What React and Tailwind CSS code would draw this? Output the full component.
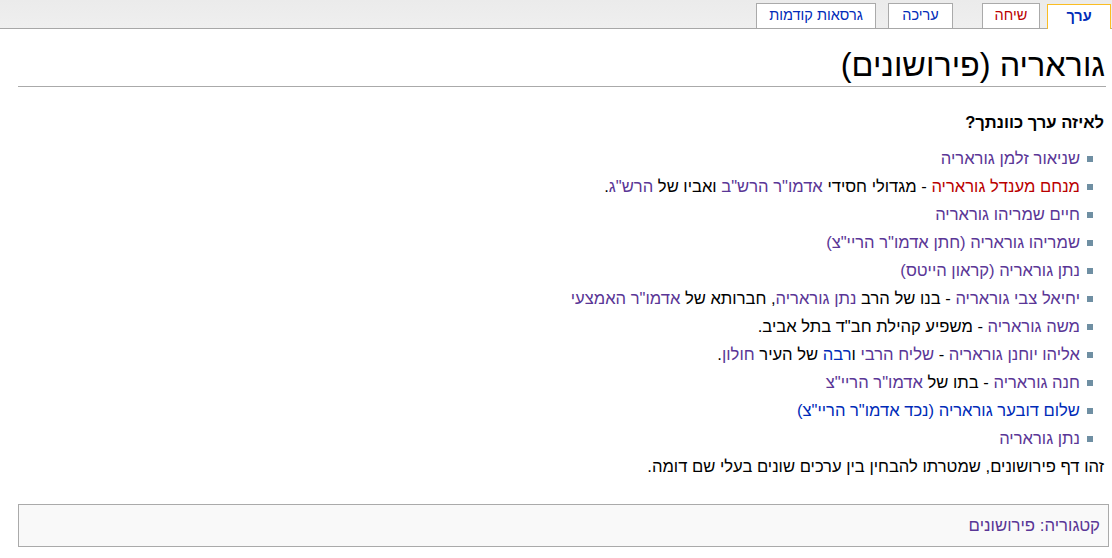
import React from "react";

const V = "text-[#5a3696]";
const B = "text-[#002bb8]";
const R = "text-[#ba0000]";

function Item({ children }) {
  return (
    <li className="flex items-center h-[28px]">
      <span className="w-[6px] h-[6px] bg-[#6f8fa3] ml-[7px] shrink-0" />
      <span>{children}</span>
    </li>
  );
}

export default function App() {
  return (
    <div
      dir="rtl"
      className="w-[1112px] h-[558px] bg-white overflow-hidden text-black"
      style={{ fontFamily: '"Liberation Sans", Arial, sans-serif' }}
    >
      {/* top tab bar */}
      <div className="h-[29px] border-b border-[#a7a7a7] bg-gradient-to-b from-[#ebebeb] to-[#efefef] flex items-end pr-[1px]">
        <div className="w-[64px] h-[25px] -mb-px bg-white border border-b-0 border-[#fabd23] flex items-center justify-center text-[14.5px] font-bold text-[#002bb8]">
          ערך
        </div>
        <div className="w-[58px] h-[25px] mr-[7px] bg-white border border-b-0 border-[#aaaaaa] flex items-center justify-center text-[14.5px] text-[#ba0000]">
          שיחה
        </div>
        <div className="w-[65px] h-[25px] mr-[29px] bg-white border border-b-0 border-[#aaaaaa] flex items-center justify-center text-[14.5px] text-[#002bb8]">
          עריכה
        </div>
        <div className="w-[120px] h-[25px] mr-[12px] bg-white border border-b-0 border-[#aaaaaa] flex items-center justify-center text-[14.5px] text-[#002bb8]">
          גרסאות קודמות
        </div>
      </div>

      {/* content */}
      <div className="pr-[6px] pl-[18px]">
        <h1 className="text-[32.4px] leading-[40px] pt-[16px] pb-[1px] border-b border-[#aaaaaa] pr-[1px]">
          גוראריה (פירושונים)
        </h1>

        <div className="text-[16.6px] pr-[2px]">
          <p className="font-bold mt-[26px] leading-[20px]">לאיזה ערך כוונתך?</p>

          <ul className="mt-[12px] pr-[11px]">
            <Item>
              <span className={V}>שניאור זלמן גוראריה</span>
            </Item>
            <Item>
              <span className={R}>מנחם מענדל גוראריה</span> - מגדולי חסידי{" "}
              <span className={V}>אדמו"ר הרש"ב</span> ואביו של{" "}
              <span className={V}>הרש"ג</span>.
            </Item>
            <Item>
              <span className={V}>חיים שמריהו גוראריה</span>
            </Item>
            <Item>
              <span className={V}>שמריהו גוראריה (חתן אדמו"ר הריי"צ)</span>
            </Item>
            <Item>
              <span className={V}>נתן גוראריה (קראון הייטס)</span>
            </Item>
            <Item>
              <span className={V}>יחיאל צבי גוראריה</span> - בנו של הרב{" "}
              <span className={V}>נתן גוראריה</span>, חברותא של{" "}
              <span className={V}>אדמו"ר האמצעי</span>
            </Item>
            <Item>
              <span className={V}>משה גוראריה</span> - משפיע קהילת חב"ד בתל אביב.
            </Item>
            <Item>
              <span className={V}>אליהו יוחנן גוראריה</span> -{" "}
              <span className={V}>שליח</span> <span className={V}>הרבי</span> ו
              <span className={B}>רבה</span> של העיר{" "}
              <span className={V}>חולון</span>.
            </Item>
            <Item>
              <span className={V}>חנה גוראריה</span> - בתו של{" "}
              <span className={V}>אדמו"ר הריי"צ</span>
            </Item>
            <Item>
              <span className={B}>שלום דובער גוראריה (נכד אדמו"ר הריי"צ)</span>
            </Item>
            <Item>
              <span className={V}>נתן גוראריה</span>
            </Item>
          </ul>

          <p className="leading-[28px]">
            זהו דף פירושונים, שמטרתו להבחין בין ערכים שונים בעלי שם דומה.
          </p>
        </div>

        <div className="mt-[23px] -mr-[3px] h-[43px] border border-[#aaaaaa] bg-[#f9f9f9] flex items-center pr-[8px] text-[16.8px]">
          <span className={V}>קטגוריה: פירושונים</span>
        </div>
      </div>
    </div>
  );
}
